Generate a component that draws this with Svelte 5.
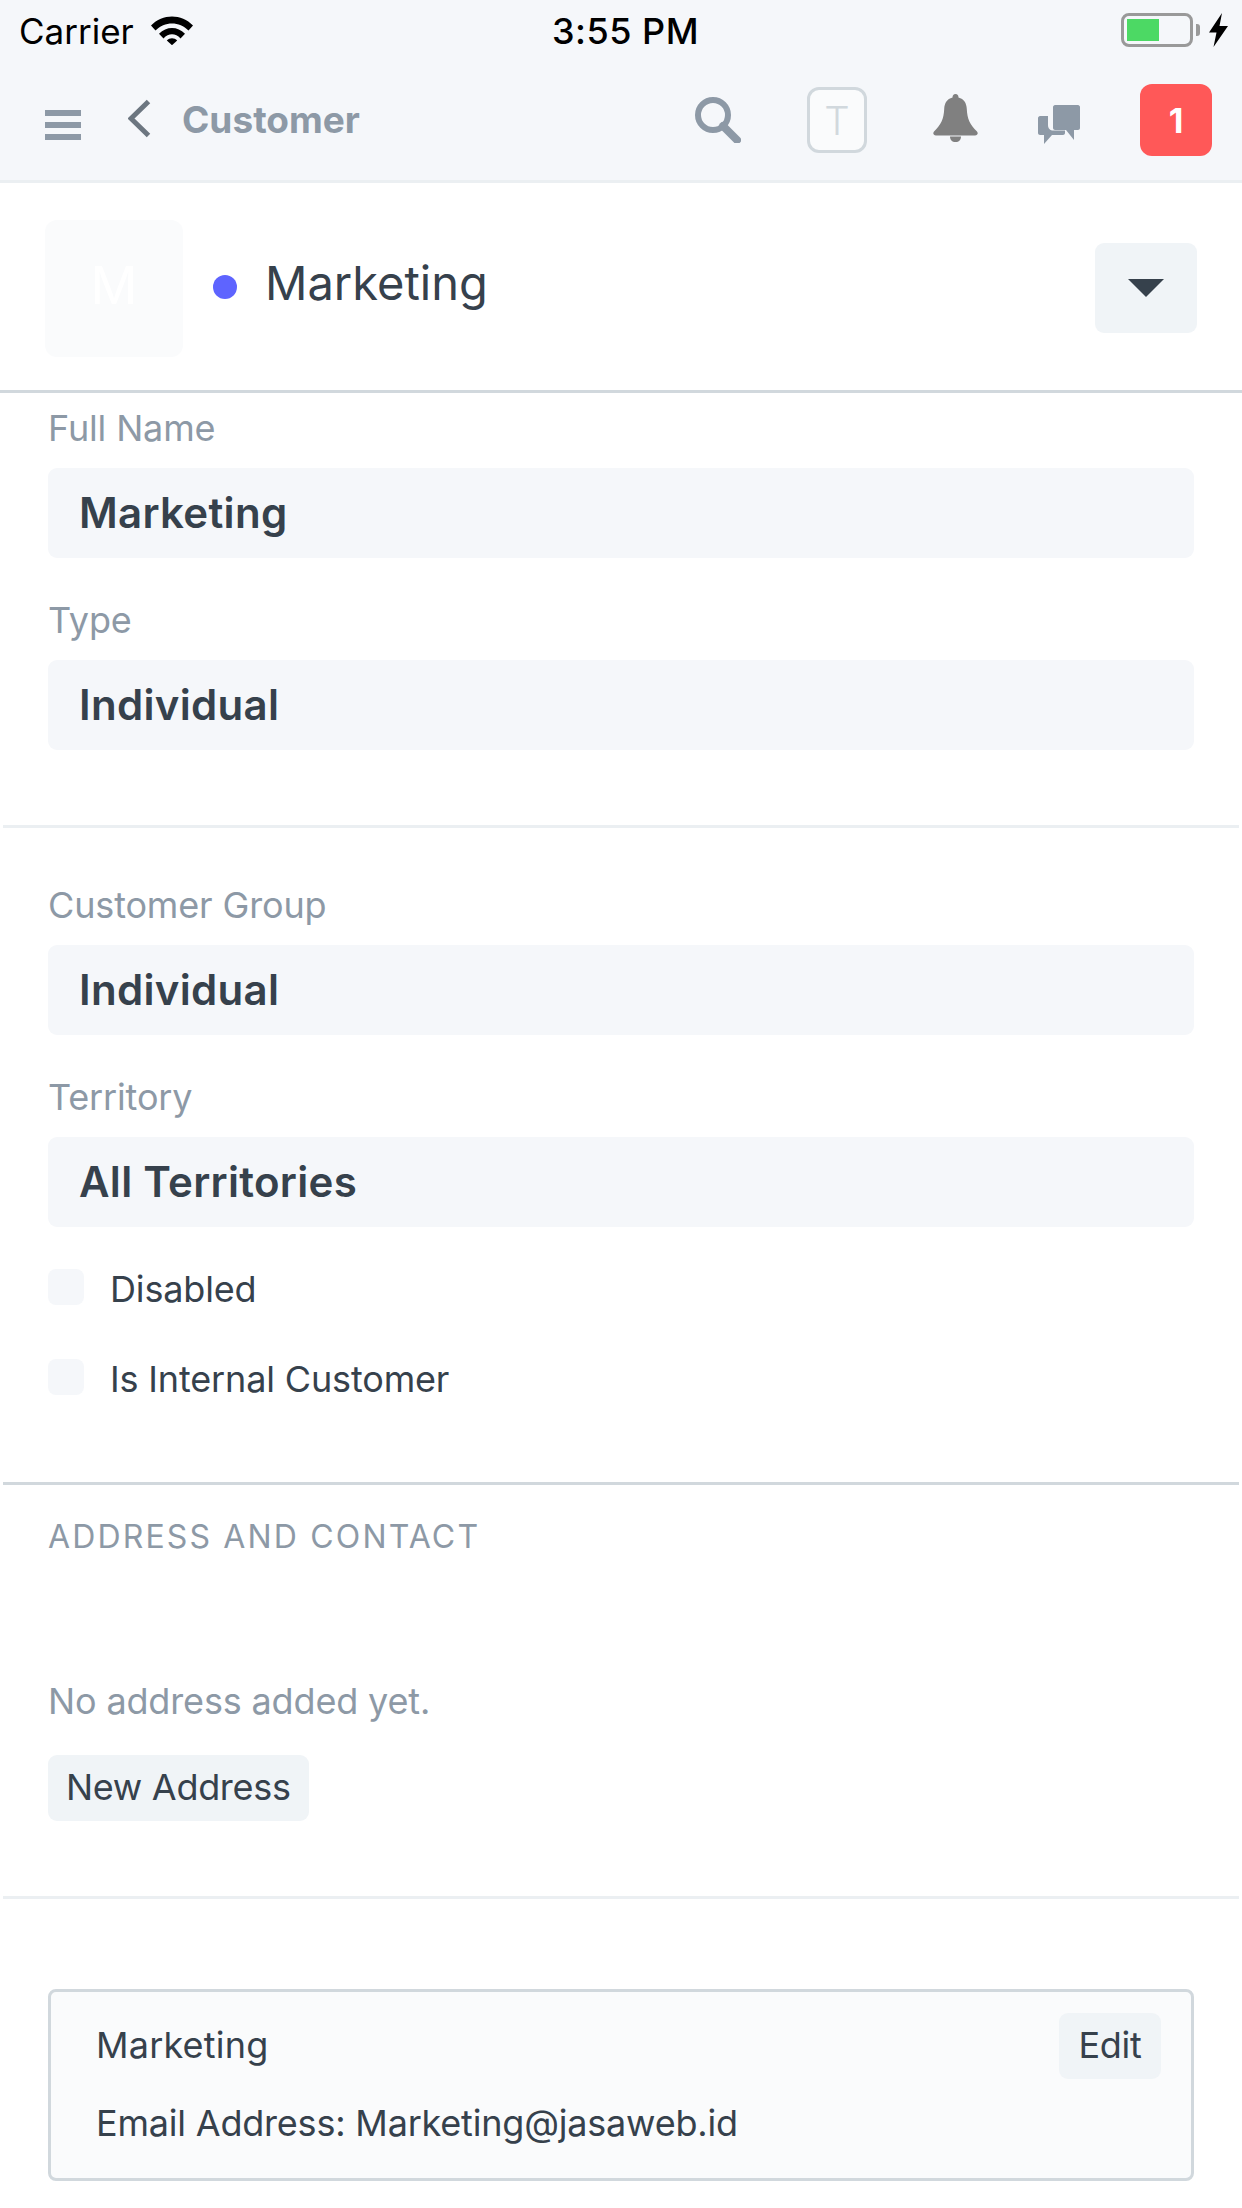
<script lang="ts">
  const firstFields = [
    { label: 'Full Name', value: 'Marketing' },
    { label: 'Type', value: 'Individual' }
  ];
  const secondFields = [
    { label: 'Customer Group', value: 'Individual' },
    { label: 'Territory', value: 'All Territories' }
  ];
  const checks = ['Disabled', 'Is Internal Customer'];
</script>

<div class="page">
  <header class="top">
    <div class="status">
      <div class="status__left">
        <span>Carrier</span>
        <svg width="42" height="30" viewBox="0 0 42 30" aria-hidden="true">
          <path d="M0 10.500C11.500-1.500 30.500-1.500 42 10.500L37.500 15.500C28.500 6 13.500 6 4.500 15.500Z" />
          <path d="M8 18.800C15.500 11 26.500 11 34 18.800L29.500 23.400C24.500 18 17.500 18 12.500 23.400Z" />
          <path d="M15.800 25.500C18.800 22.500 23.200 22.500 26.200 25.500L21 30.200Z" />
        </svg>
      </div>
      <div class="status__time">3:55 PM</div>
      <div class="status__right">
        <div class="battery"><div class="battery__fill"></div></div>
        <div class="battery__nub"></div>
        <svg class="bolt" width="19" height="34" viewBox="0 0 19 34" aria-hidden="true">
          <path d="M13 0L0 19.500H7.500L4.500 34L19 13H10.500Z" />
        </svg>
      </div>
    </div>

    <nav class="nav">
      <div class="nav__left">
        <div class="burger"><span></span><span></span><span></span></div>
        <svg class="chevron" width="23" height="39" viewBox="0 0 23 39" aria-hidden="true">
          <path d="M20.500 2.500L3 19.500L20.500 36.500" />
        </svg>
        <span class="nav__title">Customer</span>
      </div>
      <div class="nav__right">
        <svg class="search" width="46" height="46" viewBox="0 0 46 46" aria-hidden="true">
          <circle cx="18" cy="18" r="15" />
          <path d="M28 29L42 43" />
        </svg>
        <div class="avatar-small">T</div>
        <svg class="bell" width="45" height="48" viewBox="0 0 45 48" aria-hidden="true">
          <path d="M22.500 0C24.500 0 25.500 1.500 25.500 3.500C31 5 33.500 9 33.800 15C34.200 25 37 30.500 44 37.500C45.500 39.500 44.500 41.500 42 41.500H3C0.500 41.500-0.500 39.500 1 37.500C8 30.500 10.800 25 11.200 15C11.500 9 14 5 19.500 3.500C19.500 1.500 20.500 0 22.500 0Z" />
          <path d="M17 42.500H28C28 46 26 48 22.500 48C19 48 17 46 17 42.500Z" />
        </svg>
        <svg class="chat" width="42" height="39" viewBox="0 0 42 39" aria-hidden="true">
          <path d="M2 11H10V20C10 23.500 12 25.500 15.500 25.500H27V28C27 29 26 30 25 30H14L6 39V30H2C1 30 0 29 0 28V13C0 12 1 11 2 11Z" />
          <path d="M17 0H40C41 0 42 1 42 2V23C42 24 41 25 40 25H36V35L28 25H17C16 25 15 24 15 23V2C15 1 16 0 17 0Z" />
        </svg>
        <div class="badge">1</div>
      </div>
    </nav>
  </header>

  <section class="head">
    <div class="head__left">
      <div class="avatar">M</div>
      <span class="dot"></span>
      <h1>Marketing</h1>
    </div>
    <button class="menu" aria-label="Menu"><span class="caret"></span></button>
  </section>

  <section class="fields fields--first">
    {#each firstFields as field}
      <div class="field">
        <div class="field__label">{field.label}</div>
        <div class="field__value">{field.value}</div>
      </div>
    {/each}
  </section>

  <section class="fields fields--second">
    {#each secondFields as field}
      <div class="field">
        <div class="field__label">{field.label}</div>
        <div class="field__value">{field.value}</div>
      </div>
    {/each}
    <div class="checks">
      {#each checks as check}
        <div class="check">
          <span class="check__box"></span>
          <span class="check__text">{check}</span>
        </div>
      {/each}
    </div>
  </section>

  <section class="contact">
    <div class="contact__title">ADDRESS AND CONTACT</div>
    <p class="contact__empty">No address added yet.</p>
    <button class="btn">New Address</button>
  </section>

  <section class="cards">
    <div class="card">
      <div class="card__top">
        <span>Marketing</span>
        <button class="btn btn--edit">Edit</button>
      </div>
      <div class="card__line">Email Address: Marketing@jasaweb.id</div>
    </div>
  </section>
</div>

<style>
  :global(body) {
    margin: 0;
    background: #fff;
  }

  .page {
    width: 1242px;
    height: 2208px;
    overflow: hidden;
    font-family: Inter, "Liberation Sans", sans-serif;
    color: #36414c;
    font-size: 36px;
    letter-spacing: -0.15px;
  }

  .top {
    height: 180px;
    background: #f5f7fa;
    border-bottom: 3px solid #ebeff2;
  }

  .status {
    box-sizing: border-box;
    height: 60px;
    display: grid;
    grid-template-columns: 1fr auto 1fr;
    align-items: center;
    padding: 2px 14px 0 19px;
    color: #000;
    font-size: 35px;
    letter-spacing: 0;
  }

  .status__left {
    display: flex;
    align-items: center;
    gap: 17px;
  }

  .status__left svg {
    margin-top: -2px;
  }

  .status__time {
    font-weight: 500;
    font-size: 36px;
    letter-spacing: 0.5px;
    margin-left: 4px;
  }

  .status__right {
    display: flex;
    align-items: center;
    justify-content: flex-end;
    margin-top: -2px;
  }

  .battery {
    box-sizing: border-box;
    width: 72px;
    height: 34px;
    border: 3px solid #999;
    border-radius: 8px;
    padding: 3px;
  }

  .battery__fill {
    width: 32px;
    height: 100%;
    background: #4cd964;
  }

  .battery__nub {
    width: 4px;
    height: 12px;
    margin-left: 3px;
    margin-right: 9px;
    background: #999;
    border-radius: 0 3px 3px 0;
  }

  .bolt {
    fill: #000;
  }

  .nav {
    height: 120px;
    display: flex;
    justify-content: space-between;
    align-items: center;
    padding: 0 30px 0 45px;
  }

  .nav__left {
    display: flex;
    align-items: center;
  }

  .burger {
    display: flex;
    flex-direction: column;
    gap: 6px;
    width: 36px;
    margin-top: 10px;
    margin-right: 47px;
  }

  .burger span {
    height: 6px;
    background: #8d99a6;
  }

  .chevron {
    fill: none;
    stroke: #6c7680;
    stroke-width: 5;
    margin-top: -4px;
    margin-right: 31px;
  }

  .nav__title {
    color: #8d99a6;
    font-weight: 700;
    font-size: 37px;
    letter-spacing: 0;
    margin-top: -2px;
  }

  .nav__right {
    display: flex;
    align-items: center;
  }

  .search {
    fill: none;
    stroke: #8d99a6;
    stroke-width: 6;
    margin-right: 66px;
  }

  .search path {
    stroke-width: 8;
    stroke-linecap: round;
  }

  .avatar-small {
    box-sizing: border-box;
    width: 60px;
    height: 66px;
    border: 3px solid #d1d8dd;
    border-radius: 12px;
    background: #fafbfc;
    color: #d1d8dd;
    display: flex;
    align-items: center;
    justify-content: center;
    font-size: 40px;
    font-weight: 300;
    letter-spacing: 0;
    margin-right: 66px;
  }

  .bell {
    fill: #808080;
    margin-top: -5px;
    margin-right: 60px;
  }

  .chat {
    fill: #8d99a6;
    margin-top: 9px;
    margin-right: 60px;
  }

  .badge {
    width: 72px;
    height: 72px;
    border-radius: 12px;
    background: #ff5858;
    color: #fff;
    font-size: 34px;
    font-weight: 700;
    letter-spacing: 0;
    display: flex;
    align-items: center;
    justify-content: center;
  }

  .head {
    box-sizing: border-box;
    height: 210px;
    border-bottom: 3px solid #d1d8dd;
    display: flex;
    justify-content: space-between;
    align-items: center;
    padding: 3px 45px 0 45px;
  }

  .head__left {
    display: flex;
    align-items: center;
  }

  .avatar {
    box-sizing: border-box;
    width: 138px;
    height: 137px;
    padding-bottom: 5px;
    border-radius: 12px;
    background: #fafbfc;
    color: #fff;
    font-size: 52px;
    letter-spacing: 0;
    display: flex;
    align-items: center;
    justify-content: center;
  }

  .dot {
    width: 24px;
    height: 24px;
    border-radius: 50%;
    background: #5e64ff;
    margin: -3px 28px 0 30px;
  }

  h1 {
    margin: 0 0 9px;
    font-size: 47px;
    font-weight: 400;
    line-height: 1.2;
    letter-spacing: 0;
  }

  .menu {
    width: 102px;
    height: 90px;
    border: 0;
    border-radius: 9px;
    background: #f0f4f7;
    display: flex;
    align-items: center;
    justify-content: center;
    padding: 0;
  }

  .caret {
    width: 0;
    height: 0;
    border-left: 18px solid transparent;
    border-right: 18px solid transparent;
    border-top: 18px solid #36414c;
  }

  .fields {
    display: flex;
    flex-direction: column;
    gap: 42px;
    margin: 0 3px;
    padding-left: 45px;
    padding-right: 45px;
  }

  .fields--first {
    padding-top: 15px;
    padding-bottom: 75px;
    border-bottom: 3px solid #ebeff2;
  }

  .fields--second {
    padding-top: 57px;
    padding-bottom: 87px;
    border-bottom: 3px solid #d1d8dd;
  }

  .field__label {
    height: 40px;
    line-height: 41px;
    margin-bottom: 20px;
    color: #8d99a6;
  }

  .field__value {
    box-sizing: border-box;
    height: 90px;
    line-height: 90px;
    padding-left: 31px;
    border-radius: 9px;
    background: #f5f7fa;
    font-size: 42px;
    font-weight: 600;
    letter-spacing: 0.3px;
  }

  .checks {
    display: flex;
    flex-direction: column;
    gap: 54px;
  }

  .check {
    display: flex;
    align-items: center;
    gap: 26px;
    height: 36px;
  }

  .check__text {
    margin-top: 3px;
  }

  .check__box {
    width: 36px;
    height: 36px;
    border-radius: 8px;
    background: #f5f7fa;
  }

  .contact {
    margin: 0 3px;
    padding: 31px 45px 75px;
    border-bottom: 3px solid #ebeff2;
  }

  .contact__title {
    height: 40px;
    line-height: 42px;
    color: #8d99a6;
    font-size: 32px;
    letter-spacing: 2.15px;
  }

  .contact__empty {
    margin: 125px 0 34px;
    line-height: 40px;
    color: #8d99a6;
  }

  .btn {
    display: block;
    height: 66px;
    padding: 0 18px 2px;
    border: 0;
    border-radius: 9px;
    background: #f0f4f7;
    color: #36414c;
    font: inherit;
    letter-spacing: -0.3px;
  }

  .cards {
    padding: 90px 48px 0;
  }

  .card {
    box-sizing: border-box;
    height: 192px;
    padding: 21px 30px 0 45px;
    border: 3px solid #d1d8dd;
    border-radius: 8px;
    background: #fafbfc;
  }

  .card__top {
    display: flex;
    justify-content: space-between;
    align-items: center;
    margin-bottom: 24px;
    letter-spacing: 0.2px;
  }

  .card__top span {
    margin-top: -3px;
  }

  .btn--edit {
    width: 102px;
    padding: 0 0 2px;
  }

  .card__line {
    line-height: 40px;
    letter-spacing: -0.2px;
  }
</style>
